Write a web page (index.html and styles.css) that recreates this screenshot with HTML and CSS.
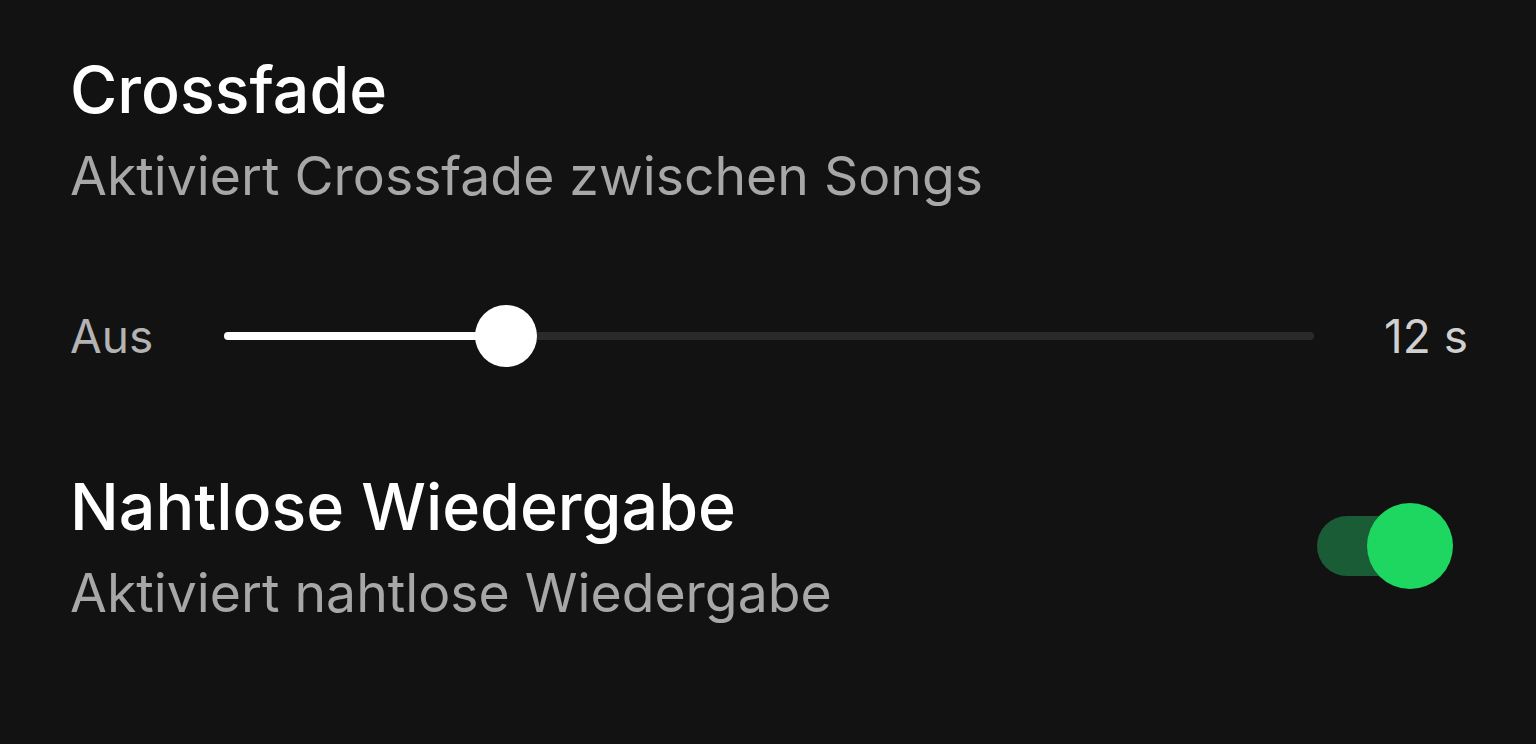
FILE: index.html
```html
<!DOCTYPE html>
<html lang="de">
<head>
  <meta charset="UTF-8">
  <title>Wiedergabe</title>
  <link rel="stylesheet" href="styles.css">
</head>
<body>
<div class="panel">
  <div class="setting">
    <div class="setting-title">Crossfade</div>
    <div class="setting-desc">Aktiviert Crossfade zwischen Songs</div>
  </div>

  <div class="slider-row">
    <span class="slider-label">Aus</span>
    <div class="slider">
      <div class="slider-fill" style="width: 25.9%"></div>
      <div class="slider-thumb" style="left: 25.9%"></div>
    </div>
    <span class="slider-label value">12 s</span>
  </div>

  <div class="setting toggle-row">
    <div>
      <div class="setting-title">Nahtlose Wiedergabe</div>
      <div class="setting-desc">Aktiviert nahtlose Wiedergabe</div>
    </div>
    <div class="toggle on"><div class="toggle-knob"></div></div>
  </div>
</div>
</body>
</html>
```

FILE: styles.css
```css
html, body { margin: 0; height: 100%; }
body { background: #121212; font-family: Inter, "Noto Sans", sans-serif; color: #fff; overflow: hidden; }
.panel { padding: 52px 68px 0 70px; }
.setting-title { font-size: 64.5px; line-height: 76px; color: #fff; font-weight: 500; }
.setting-desc { font-size: 53.5px; line-height: 60px; margin-top: 18px; color: #a7a7a7; }
.slider-row { display: flex; align-items: center; margin-top: 100px; height: 60px; }
.slider-label { font-size: 46px; color: #b3b3b3; width: 154px; }
.slider-label.value { width: auto; margin-left: 70px; color: #d0d0d0; }
.slider { position: relative; flex: 1; height: 8px; background: #2a2a2a; border-radius: 4px; }
.slider-fill { height: 100%; background: #fff; border-radius: 4px; }
.slider-thumb { position: absolute; top: 50%; width: 62px; height: 62px; margin: -31px 0 0 -31px; background: #fff; border-radius: 50%; }
.toggle-row { display: flex; justify-content: space-between; align-items: center; margin-top: 103px; }
.toggle { position: relative; width: 136px; height: 86px; margin-right: 15px; }
.toggle::before { content: ""; position: absolute; left: 0; top: 13px; width: 110px; height: 60px; border-radius: 30px; background: #1a5c36; }
.toggle-knob { position: absolute; right: 0; top: 0; width: 86px; height: 86px; border-radius: 50%; background: #1ed760; }
```
